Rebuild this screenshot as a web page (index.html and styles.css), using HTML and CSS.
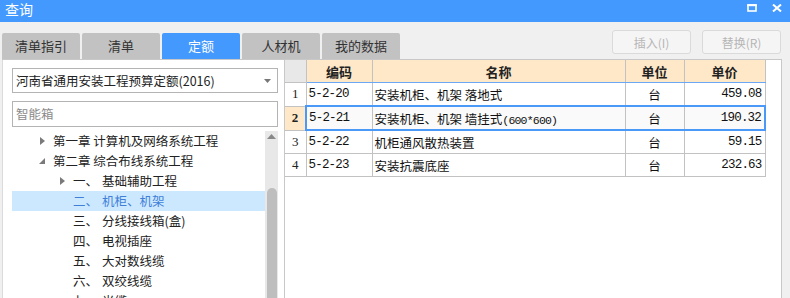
FILE: index.html
```html
<!DOCTYPE html>
<html lang="zh-CN">
<head>
    <meta charset="UTF-8">
    <title>查询</title>
    <link rel="stylesheet" href="styles.css">
</head>
<body>
    <div class="window">
        <!-- Title bar -->
        <div class="titlebar">
            <span class="title">查询</span>
            <div class="win-btns">
                <svg width="10" height="8" viewBox="0 0 10 8"><rect x="1" y="1" width="8" height="6" fill="none" stroke="#fff" stroke-width="1.6"/><rect x="0.2" y="0.2" width="9.6" height="2" fill="#fff"/></svg>
                <svg width="10" height="8" viewBox="0 0 10 8"><path d="M1 0.5 L9 7.5 M9 0.5 L1 7.5" stroke="#fff" stroke-width="2"/></svg>
            </div>
        </div>

        <!-- Tabs and actions -->
        <div class="toolbar">
            <div class="tabs">
                <div class="tab">清单指引</div>
                <div class="tab">清单</div>
                <div class="tab active">定额</div>
                <div class="tab">人材机</div>
                <div class="tab">我的数据</div>
            </div>
            <div class="actions">
                <button class="btn" disabled>插入(I)</button>
                <button class="btn" disabled>替换(R)</button>
            </div>
        </div>

        <div class="content">
            <!-- Left: quota library tree -->
            <div class="side">
                <div class="select">
                    <span>河南省通用安装工程预算定额(2016)</span>
                    <svg width="7" height="4" viewBox="0 0 7 4"><path d="M0 0 H7 L3.5 4 Z" fill="#777"/></svg>
                </div>
                <div class="search">智能箱</div>
                <div class="tree-wrap">
                    <ul class="tree">
                        <li class="node lv1"><span class="arrow closed"></span>第一章 计算机及网络系统工程</li>
                        <li class="node lv1"><span class="arrow open"></span>第二章 综合布线系统工程</li>
                        <li class="node lv2"><span class="arrow closed"></span><span class="num">一、</span>基础辅助工程</li>
                        <li class="node lv2 selected"><span class="arrow"></span><span class="num">二、</span>机柜、机架</li>
                        <li class="node lv2"><span class="arrow"></span><span class="num">三、</span>分线接线箱(盒)</li>
                        <li class="node lv2"><span class="arrow"></span><span class="num">四、</span>电视插座</li>
                        <li class="node lv2"><span class="arrow"></span><span class="num">五、</span>大对数线缆</li>
                        <li class="node lv2"><span class="arrow"></span><span class="num">六、</span>双绞线缆</li>
                        <li class="node lv2"><span class="arrow"></span><span class="num">七、</span>光缆</li>
                    </ul>
                    <div class="scrollbar">
                        <svg class="up" width="9" height="5" viewBox="0 0 9 5"><path d="M0 5 L4.5 0 L9 5 Z" fill="#888"/></svg>
                        <div class="thumb"></div>
                    </div>
                </div>
            </div>

            <!-- Right: quota items -->
            <div class="main">
                <table class="grid">
                    <colgroup>
                        <col style="width:21px">
                        <col style="width:66px">
                        <col style="width:253px">
                        <col style="width:59px">
                        <col style="width:81px">
                    </colgroup>
                    <thead>
                        <tr>
                            <th class="corner"></th>
                            <th>编码</th>
                            <th>名称</th>
                            <th>单位</th>
                            <th>单价</th>
                        </tr>
                    </thead>
                    <tbody>
                        <tr>
                            <td class="rn">1</td>
                            <td class="mono">5-2-20</td>
                            <td>安装机柜、机架 落地式</td>
                            <td class="unit">台</td>
                            <td class="mono price">459.08</td>
                        </tr>
                        <tr class="current">
                            <td class="rn">2</td>
                            <td class="mono">5-2-21</td>
                            <td>安装机柜、机架 墙挂式<span class="mono">(600*600)</span></td>
                            <td class="unit">台</td>
                            <td class="mono price">190.32</td>
                        </tr>
                        <tr>
                            <td class="rn">3</td>
                            <td class="mono">5-2-22</td>
                            <td>机柜通风散热装置</td>
                            <td class="unit">台</td>
                            <td class="mono price">59.15</td>
                        </tr>
                        <tr>
                            <td class="rn">4</td>
                            <td class="mono">5-2-23</td>
                            <td>安装抗震底座</td>
                            <td class="unit">台</td>
                            <td class="mono price">232.63</td>
                        </tr>
                    </tbody>
                </table>
            </div>
        </div>
    </div>
</body>
</html>
```

FILE: styles.css
```css
body {
    margin: 0;
    padding: 0;
    background-color: #f0f0f0;
    font-family: "Noto Sans CJK SC", "Noto Sans", sans-serif;
    font-size: 12px;
    color: #333;
    overflow: hidden;
}
.window {
    width: 790px;
    height: 298px;
    display: flex;
    flex-direction: column;
}
.titlebar {
    height: 22px;
    flex: none;
    background-color: #4499ff;
    display: flex;
    align-items: flex-start;
    justify-content: space-between;
}
.title {
    color: #fff;
    font-size: 14px;
    line-height: 18px;
    padding-left: 5px;
}
.win-btns {
    display: flex;
    gap: 15px;
    padding: 4px 8px 0 0;
}
.win-btns svg {
    display: block;
}
.toolbar {
    height: 37px;
    flex: none;
    display: flex;
    justify-content: space-between;
}
.tabs {
    display: flex;
    align-items: flex-end;
    gap: 2px;
    padding-left: 2px;
}
.tab {
    width: 78px;
    height: 26px;
    line-height: 26px;
    text-align: center;
    background-color: #c2c2c2;
    color: #333;
    border-radius: 2px 2px 0 0;
    font-size: 13px;
}
.tab.active {
    background-color: #4499ff;
    color: #fff;
}
.actions {
    display: flex;
    gap: 11px;
    padding: 8px 9px 0 0;
}
.btn {
    width: 79px;
    height: 24px;
    border: 1px solid #dadada;
    border-radius: 3px;
    background-color: #f5f5f5;
    color: #b5b5b5;
    font-family: "Noto Sans CJK SC", "Noto Sans", sans-serif;
    font-size: 12px;
    padding: 0;
}
.content {
    flex: 1;
    display: flex;
    margin-left: 2px;
    width: 780px;
    border-top: 1px solid #c8c8c8;
    min-height: 0;
}
.side {
    width: 283px;
    box-sizing: border-box;
    background-color: #fff;
    border-left: 1px solid #dcdcdc;
    border-right: 1px solid #c8c8c8;
    padding: 8px 0 0 9px;
    overflow: hidden;
}
.select {
    width: 266px;
    height: 25px;
    box-sizing: border-box;
    border: 1px solid #b4b4b4;
    display: flex;
    align-items: center;
    justify-content: space-between;
    padding: 0 6px 0 3px;
    font-size: 12.5px;
    color: #222;
}
.search {
    width: 266px;
    height: 26px;
    box-sizing: border-box;
    margin-top: 8px;
    border: 1px solid #b4b4b4;
    line-height: 24px;
    padding-left: 3px;
    color: #8a8a8a;
    font-size: 12.5px;
}
.tree-wrap {
    margin-top: 4px;
    width: 266px;
    display: flex;
    height: 200px;
}
.tree {
    list-style: none;
    margin: 0;
    padding: 0;
    width: 253px;
}
.node {
    height: 20px;
    line-height: 20px;
    display: flex;
    align-items: center;
    white-space: nowrap;
    color: #222;
    font-size: 12.5px;
}
.node.lv1 {
    padding-left: 27px;
}
.node.lv2 {
    padding-left: 47px;
}
.node.selected {
    background-color: #cce8ff;
    color: #3f7fd8;
}
.arrow {
    width: 14px;
    height: 20px;
    flex: none;
    position: relative;
}
.arrow.closed::before {
    content: "";
    position: absolute;
    left: 1px;
    top: 6px;
    border-left: 5px solid #7a7a7a;
    border-top: 4px solid transparent;
    border-bottom: 4px solid transparent;
}
.arrow.open::before {
    content: "";
    position: absolute;
    left: 0;
    top: 7px;
    border-right: 6px solid #7a7a7a;
    border-top: 6px solid transparent;
}
.num {
    width: 29px;
    flex: none;
}
.scrollbar {
    width: 13px;
    background-color: #e8e8e8;
    display: flex;
    flex-direction: column;
    align-items: center;
}
.scrollbar .up {
    margin-top: 3px;
    display: block;
}
.thumb {
    width: 10px;
    margin-top: 49px;
    flex: 1;
    background-color: #bebebe;
    border-radius: 5px 5px 0 0;
}
.main {
    flex: 1;
    background-color: #fff;
    border-right: 1px solid #c8c8c8;
}
.grid {
    border-collapse: collapse;
    table-layout: fixed;
    width: 481px;
}
.grid th, .grid td {
    border: 1px solid #c2c2c2;
    height: 22px;
    padding: 0 2px;
    white-space: nowrap;
    overflow: hidden;
}
.grid th {
    background-color: #fee8c8;
    font-size: 13px;
    font-weight: bold;
    color: #222;
    border-bottom-color: #6aa8f5;
    border-top: none;
}
.grid th.corner {
    background-color: #e8e8e8;
    border-bottom-color: #c2c2c2;
    border-left: none;
}
.grid td {
    font-size: 12.5px;
    color: #111;
}
.grid td.rn {
    text-align: center;
    font-family: "Liberation Serif", serif;
    font-size: 13px;
    padding: 0;
    border-left: none;
    color: #222;
}
.mono {
    font-family: "Liberation Mono", monospace;
    font-size: 11.5px;
    letter-spacing: -0.8px;
}
.grid td.unit {
    text-align: center;
}
.grid td.price {
    text-align: right;
    padding-right: 3px;
}
.grid tr.current td {
    background-color: #fafafa;
    border-top: 2px solid #4a98f7;
    border-bottom: 2px solid #4a98f7;
}
.grid tr.current td:nth-child(2) {
    border-left: 2px solid #4a98f7;
}
.grid tr.current td:last-child {
    border-right: 2px solid #4a98f7;
}
.grid tr.current td.rn {
    background-color: #fee8c8;
    font-weight: bold;
    border-top: 1px solid #c2c2c2;
    border-bottom: 1px solid #c2c2c2;
}
```
